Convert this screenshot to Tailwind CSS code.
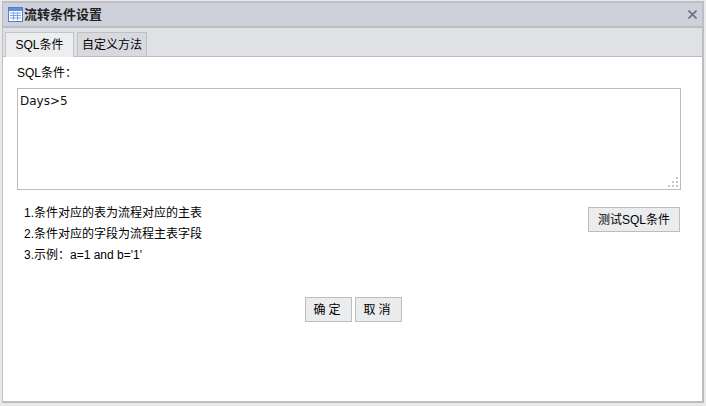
<!DOCTYPE html>
<html lang="zh-CN">
<head>
    <meta charset="UTF-8">
    <title>流转条件设置</title>
    <script src="https://cdn.jsdelivr.net/npm/@tailwindcss/browser@4"></script>
</head>
<body class="w-[706px] h-[406px] overflow-hidden bg-[#e9e9e9] font-['Liberation_Sans','Noto_Sans_CJK_SC',sans-serif] text-[12px] text-black">
    <div class="ml-[2px] mt-[1px] w-[702px] h-[402px] border-2 border-l border-[#bdbdc4] bg-white flex flex-col box-border">
        <!-- Title bar -->
        <div class="h-[25px] bg-[#ced1d9] border-b-2 border-[#bcbdc3] flex items-center pl-[5px] pr-[5px] shrink-0 box-border">
            <svg width="15" height="15" viewBox="0 0 15 15" class="shrink-0">
                <rect x="0.5" y="0.5" width="14" height="14" fill="#fff" stroke="#4d7fd0"/>
                <rect x="1" y="1" width="13" height="3" fill="#5f90dc"/>
                <path d="M2 6h11M2 8.500h11M2 11h11M5.500 5v8M9.500 5v8" stroke="#7ba3e3" fill="none"/>
            </svg>
            <span class="ml-[1px] text-[13px] font-bold leading-none text-[#222]">流转条件设置</span>
            <svg width="9" height="9" viewBox="0 0 9 9" class="ml-auto">
                <path d="M0.500 0.500l8 8M8.500 0.500l-8 8" stroke="#6b7080" stroke-width="1.600" fill="none"/>
            </svg>
        </div>
        <!-- Tabs -->
        <div class="h-[29px] bg-[#e0e1e5] border-b border-[#bcbdc3] flex items-end pl-[2px] gap-[3px] shrink-0 box-border">
            <div class="w-[69px] h-[25px] -mb-px bg-[#eceef0] border border-b-0 border-[#c3c4c9] flex items-center justify-center text-[12px] box-border">SQL条件</div>
            <div class="w-[70px] h-[24px] bg-[#d8d9df] border border-b-0 border-[#bfc0c6] flex items-center justify-center text-[12px] box-border">自定义方法</div>
        </div>
        <!-- Content -->
        <div class="flex-1 flex flex-col pl-[14px] pr-[21px] min-h-0">
            <div class="h-[31px] flex items-center leading-none pt-[1px]">SQL条件：</div>
            <div class="relative w-[664px] h-[102px] border border-[#bcbcbc] box-border">
                <div class="pl-[2px] pt-[5px] font-['DejaVu_Sans',sans-serif] text-[12px] leading-[14px] text-[#111]">Days&gt;5</div>
                <svg width="13" height="13" viewBox="0 0 13 13" class="absolute right-0 bottom-0" fill="#c8c8c8">
                    <rect x="9" y="1" width="2" height="2"/>
                    <rect x="5" y="5" width="2" height="2"/><rect x="9" y="5" width="2" height="2"/>
                    <rect x="1" y="9" width="2" height="2"/><rect x="5" y="9" width="2" height="2"/><rect x="9" y="9" width="2" height="2"/>
                </svg>
            </div>
            <div class="flex justify-between items-start mt-[14px]">
                <div class="pl-[7px] leading-[21px] -mt-[1px]">
                    <p>1.条件对应的表为流程对应的主表</p>
                    <p>2.条件对应的字段为流程主表字段</p>
                    <p>3.示例：a=1 and b='1'</p>
                </div>
                <button class="w-[92px] h-[25px] mt-[3px] mr-[1px] bg-[#ebecee] border border-[#bcbdc0] text-[12px] flex items-center justify-center box-border">测试SQL条件</button>
            </div>
            <div class="flex justify-center gap-[3px] mt-[31px] pl-[9px]">
                <button class="w-[47px] h-[25px] bg-[#ebecee] border border-[#bcbdc0] text-[12px] tracking-[3px] flex items-center justify-center box-border">确定</button>
                <button class="w-[47px] h-[25px] bg-[#ebecee] border border-[#bcbdc0] text-[12px] tracking-[3px] flex items-center justify-center box-border">取消</button>
            </div>
        </div>
    </div>
</body>
</html>
